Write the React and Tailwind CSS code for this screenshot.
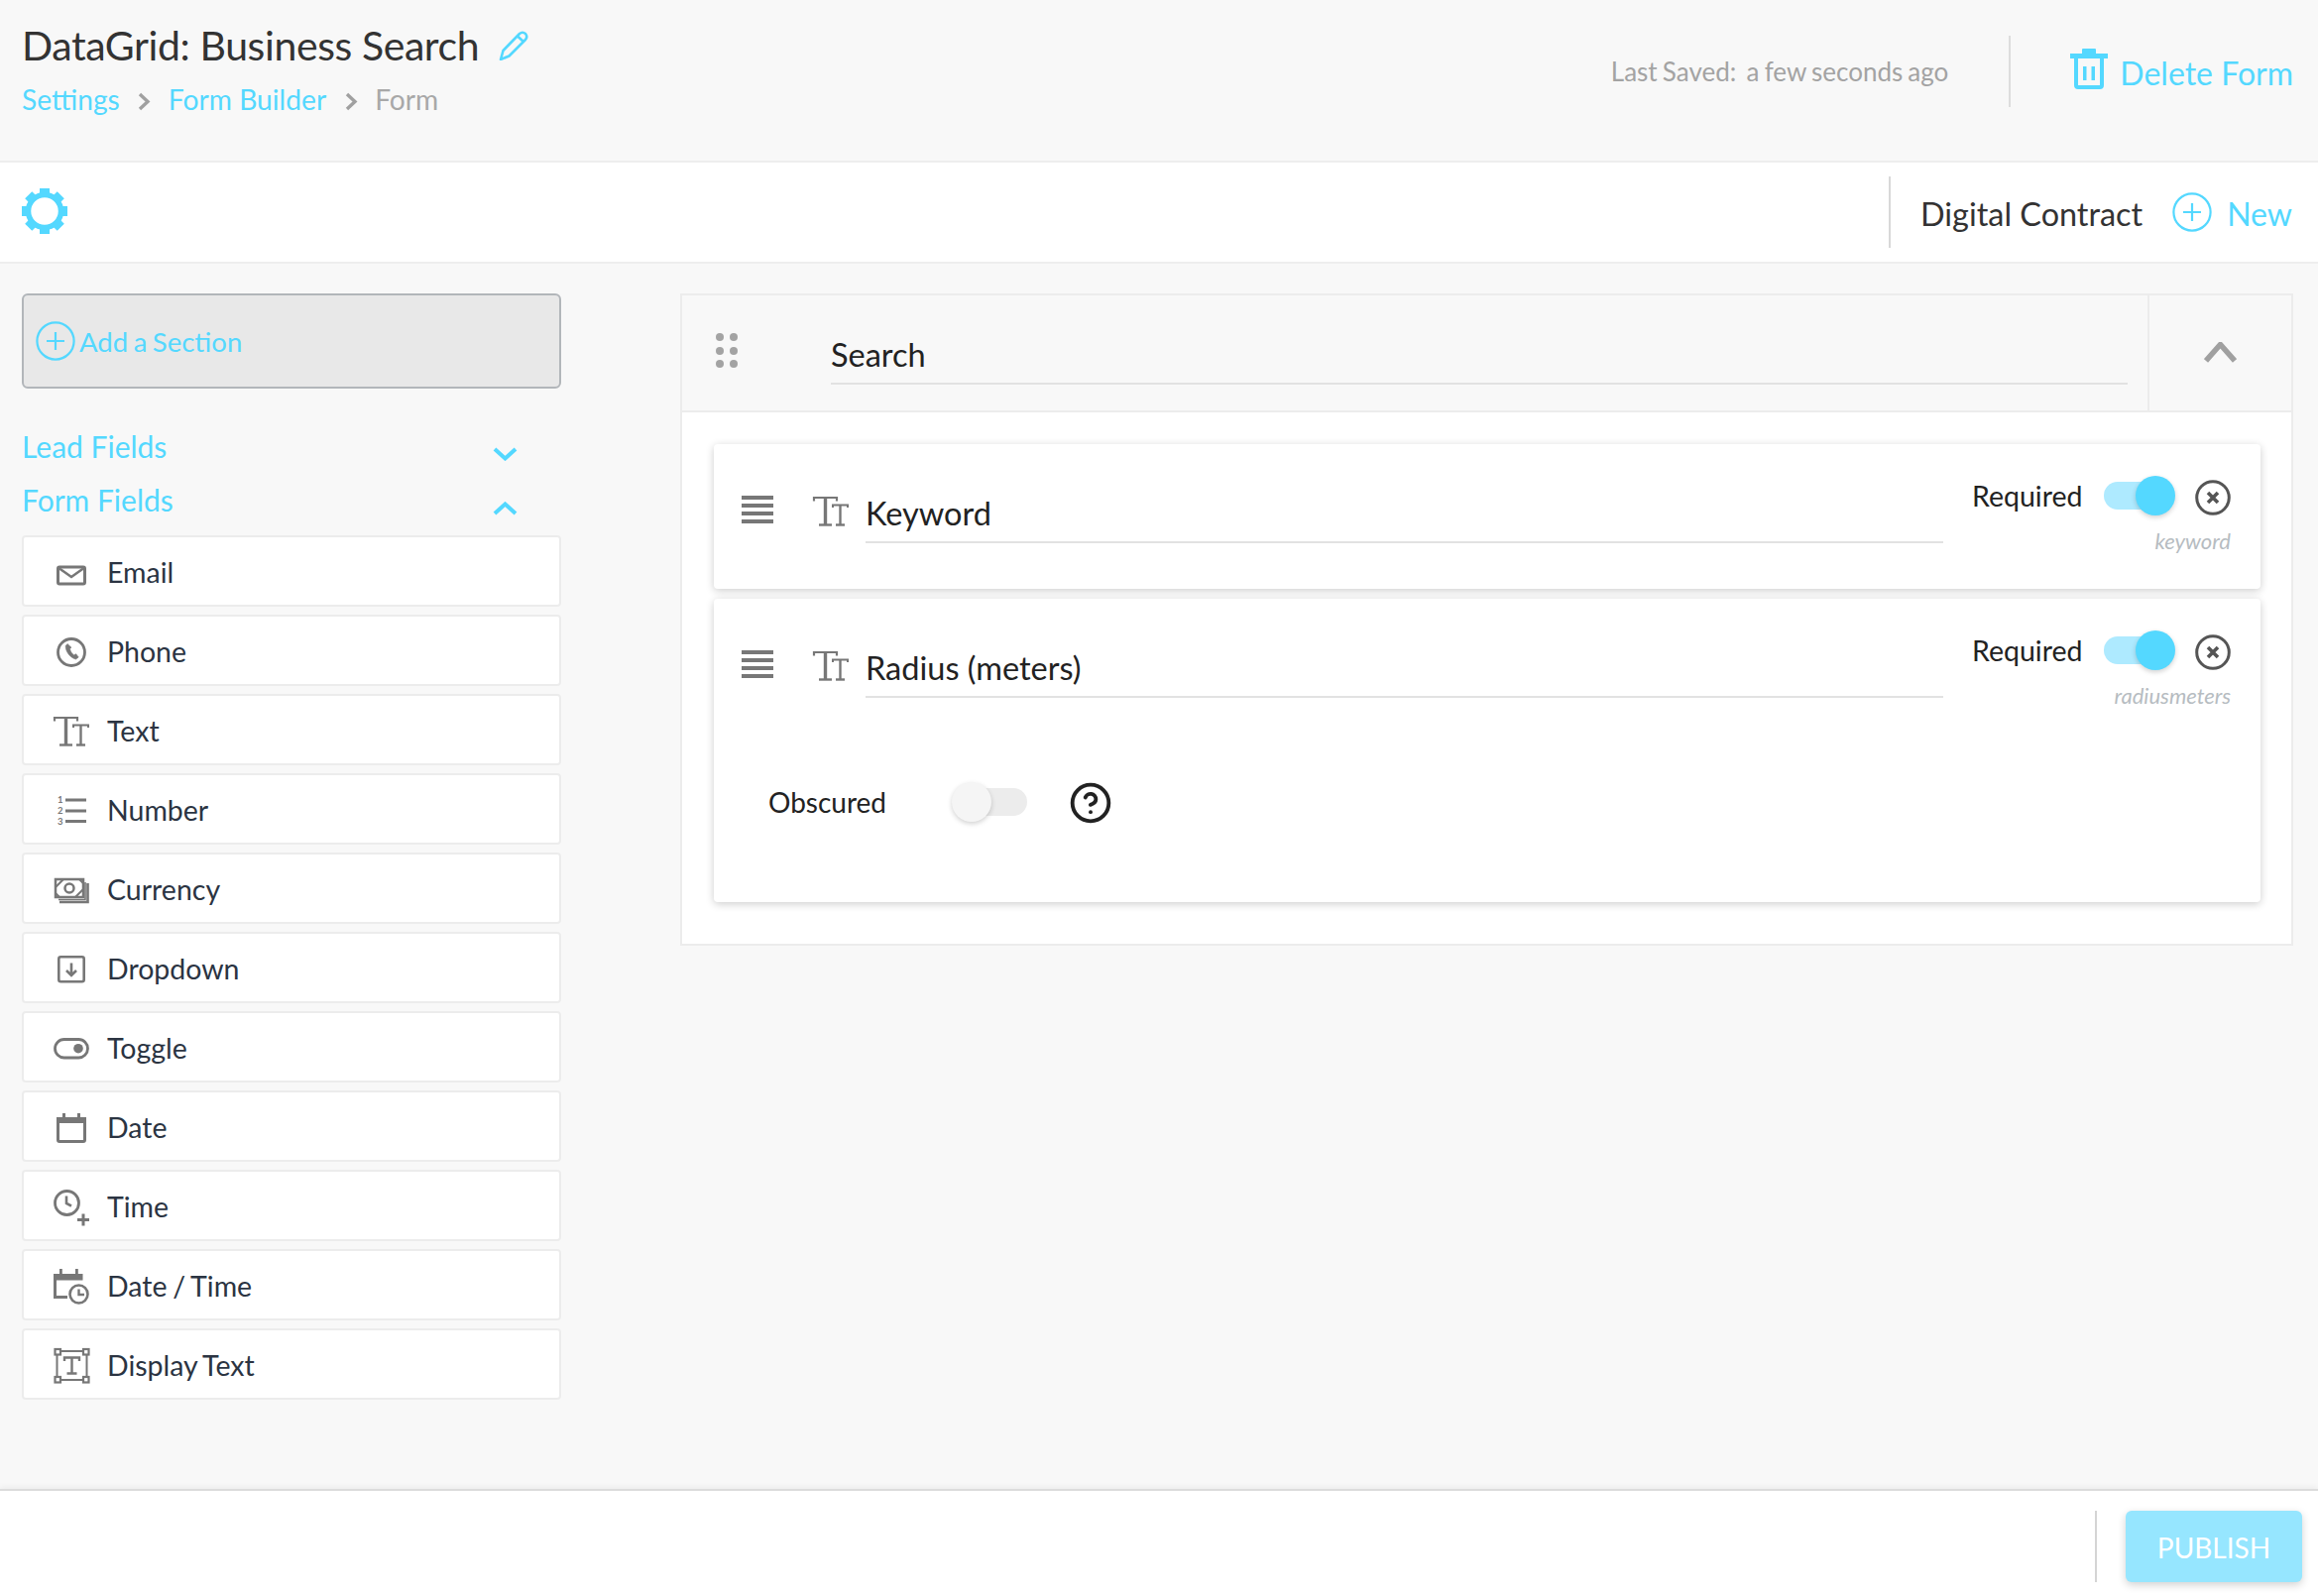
import React from "react";
import { CircleHelp } from "lucide-react";

const gray = "#777777";

function Gear() {
  return (
    <svg width="46" height="46" viewBox="0 0 46 46" fill="none" className="mb-[2px]">
      <circle cx="23" cy="23" r="16.5" stroke="#54d8ff" strokeWidth="5.5" />
      {[0, 45, 90, 135, 180, 225, 270, 315].map((a) => (
        <rect key={a} x="18" y="0" width="10" height="8" fill="#54d8ff" transform={`rotate(${a} 23 23)`} />
      ))}
    </svg>
  );
}

function Pencil() {
  return (
    <svg width="30" height="30" viewBox="0 0 30 30" fill="none" stroke="#54d8ff" strokeWidth="2.6" strokeLinejoin="round">
      <path d="M2 29 L4.5 20 L21 3 Q24 0.5 27 3 Q29.5 6 27 9 L10.5 25.5 Z" />
      <path d="M19 5.5 L25 11" />
    </svg>
  );
}

function Trash() {
  return (
    <svg width="38" height="41" viewBox="0 0 38 41" fill="#54d8ff">
      <rect x="12" y="0" width="14" height="8" rx="1" />
      <rect x="0" y="5" width="38" height="5" />
      <path d="M6 10 V37 Q6 39 8 39 H30 Q32 39 32 37 V10" fill="none" stroke="#54d8ff" strokeWidth="4" />
      <rect x="13" y="18" width="3.5" height="14" />
      <rect x="21.5" y="18" width="3.5" height="14" />
    </svg>
  );
}

function PlusCircle() {
  return (
    <svg width="40" height="40" viewBox="0 0 40 40" fill="none" stroke="#54d8ff" strokeWidth="2.2" className="shrink-0">
      <circle cx="20" cy="20" r="18.6" />
      <path d="M11 20 H29 M20 11 V29" />
    </svg>
  );
}

function Chevron({ up, color = "#54d8ff", w = 25, h = 14, sw = 4 }) {
  const points = up
    ? `2,${h - 2} ${w / 2},2.5 ${w - 2},${h - 2}`
    : `2,2 ${w / 2},${h - 2.5} ${w - 2},2`;
  return (
    <svg width={w} height={h} viewBox={`0 0 ${w} ${h}`} fill="none" stroke={color} strokeWidth={sw}>
      <polyline points={points} />
    </svg>
  );
}

function Crumb() {
  return (
    <svg width="13" height="19" viewBox="0 0 13 19" fill="none" stroke="#a0a0a0" strokeWidth="3.4" className="mt-[11px]">
      <polyline points="2,2 10,9.5 2,17" />
    </svg>
  );
}

function TtIcon() {
  return (
    <svg width="36" height="36" viewBox="0 0 36 36" fill="none" stroke={gray} className="overflow-visible shrink-0">
      <path d="M1 9.5 V6 H24 V9.5" strokeWidth="2.2" />
      <path d="M12.5 6 V33" strokeWidth="3.4" />
      <path d="M6 33.5 H19" strokeWidth="2.4" />
      <path d="M20 16 V13.5 H35 V16" strokeWidth="2" />
      <path d="M27.5 13.5 V33" strokeWidth="2.4" />
      <path d="M23 33.5 H32" strokeWidth="2.4" />
    </svg>
  );
}

// sidebar field icons all sit in a 36 box
const fieldIcons = {
  Email: (
    <g fill="none" stroke={gray} strokeWidth="3">
      <rect x="4.5" y="14" width="27" height="17" rx="1.5" />
      <polyline points="6,15.5 18,24 30,15.5" strokeWidth="2.5" />
    </g>
  ),
  Phone: (
    <g fill="none" stroke={gray}>
      <circle cx="18" cy="20" r="13.5" strokeWidth="2.8" />
      <path d="M14 11.5 L12.2 13.5 C12 19 16.5 25.5 22.5 27 L25.2 25 L22.7 21.7 L20.5 22.8 C18.5 21.5 17 19 16.5 16.6 L18 15.2 Z" fill={gray} strokeWidth="0.6" />
    </g>
  ),
  Number: (
    <g>
      <path d="M12 9 H33 M12 20 H33 M12 30.5 H33" stroke={gray} strokeWidth="3" />
      <text x="4" y="11.5" fontSize="9.5" fontWeight="700" fill={gray} fontFamily="Lato, sans-serif">1</text>
      <text x="4" y="23" fontSize="9.5" fontWeight="700" fill={gray} fontFamily="Lato, sans-serif">2</text>
      <text x="4" y="34" fontSize="9.5" fontWeight="700" fill={gray} fontFamily="Lato, sans-serif">3</text>
    </g>
  ),
  Currency: (
    <g fill="none" stroke={gray} strokeWidth="2.5">
      <rect x="2" y="9" width="28" height="18" />
      <circle cx="16" cy="18" r="4.5" />
      <path d="M2 17 L10 9 M30 19 L22 27 M2 23 L6 27 M30 13 L26 9" strokeWidth="2" />
      <path d="M34.5 13 V32 H6" strokeWidth="2.6" />
      <path d="M32 12 V29.5 H5" strokeWidth="1.6" />
    </g>
  ),
  Dropdown: (
    <g fill="none" stroke={gray} strokeWidth="2.6">
      <rect x="5.3" y="7.3" width="25.4" height="25" rx="2" />
      <path d="M18 13.5 V26 M13 21 L18 26 L23 21" />
    </g>
  ),
  Toggle: (
    <g>
      <rect x="1.5" y="10.5" width="33" height="18.5" rx="9.2" fill="none" stroke={gray} strokeWidth="2.8" />
      <circle cx="25" cy="19.7" r="4.8" fill={gray} />
    </g>
  ),
  Date: (
    <g fill={gray}>
      <rect x="4.5" y="11" width="27" height="22.5" rx="1.5" fill="none" stroke={gray} strokeWidth="3" />
      <rect x="3" y="9" width="30" height="6" />
      <rect x="9" y="5" width="3" height="6" />
      <rect x="24" y="5" width="3" height="6" />
    </g>
  ),
  Time: (
    <g fill="none" stroke={gray}>
      <circle cx="13.5" cy="15.5" r="12" strokeWidth="2.8" />
      <polyline points="13,8.5 13,16 18,18.5" strokeWidth="2.6" />
      <path d="M24 32.5 H36 M30 26.5 V38.5" strokeWidth="3" />
    </g>
  ),
  "Date / Time": (
    <g fill="none" stroke={gray}>
      <path d="M1.5 10 V30.5 H14" strokeWidth="3" />
      <rect x="0" y="7" width="29.5" height="6.5" fill={gray} stroke="none" />
      <rect x="6" y="2" width="2.8" height="6" fill={gray} stroke="none" />
      <rect x="22" y="2" width="2.8" height="6" fill={gray} stroke="none" />
      <circle cx="25.5" cy="27.5" r="9" strokeWidth="2.6" />
      <polyline points="25.5,22.5 25.5,28 31,28" strokeWidth="2.4" />
    </g>
  ),
  "Display Text": (
    <g fill="none" stroke={gray}>
      <rect x="3.5" y="5" width="30" height="29" strokeWidth="2" />
      <g fill="#fff" strokeWidth="2.2">
        <rect x="1.5" y="3" width="5.5" height="5.5" />
        <rect x="30" y="3" width="5.5" height="5.5" />
        <rect x="1.5" y="31" width="5.5" height="5.5" />
        <rect x="30" y="31" width="5.5" height="5.5" />
      </g>
      <path d="M11 15 V11.5 H26 V15 M18.5 11.5 V27.5 M13.5 27.5 H23.5" strokeWidth="2.4" />
    </g>
  ),
};

const fields = ["Email", "Phone", "Text", "Number", "Currency", "Dropdown", "Toggle", "Date", "Time", "Date / Time", "Display Text"];

function FieldRow({ name }) {
  return (
    <div className="flex h-[72px] items-center rounded-[4px] border-2 border-[#ececec] bg-white pl-[30px] text-[28.5px] text-[#2b3442] [word-spacing:-1.5px]">
      {name === "Text" ? (
        <TtIcon />
      ) : (
        <svg width="36" height="36" viewBox="0 0 36 36" className="shrink-0 overflow-visible">
          {fieldIcons[name]}
        </svg>
      )}
      <span className="ml-[18px] pt-[2px]">{name}</span>
    </div>
  );
}

function Switch({ on }) {
  return (
    <div className={`relative h-[28px] w-[68px] shrink-0 rounded-full ${on ? "bg-[#aeeaff]" : "bg-[#ececec]"}`}>
      <div
        className={`absolute top-[-6px] h-[40px] w-[40px] rounded-full shadow-[0_2px_5px_rgba(0,0,0,0.18)] ${
          on ? "right-[-4px] bg-[#54d8ff]" : "left-[-8px] bg-[#f5f5f5]"
        }`}
      />
    </div>
  );
}

function CloseCircle() {
  return (
    <svg width="36" height="36" viewBox="0 0 36 36" fill="none" stroke="#555555" className="ml-[24px] mt-[4px] shrink-0">
      <circle cx="18" cy="18" r="16.3" strokeWidth="3" />
      <path d="M13 13 L23 23 M23 13 L13 23" strokeWidth="3.6" />
    </svg>
  );
}

function Hamburger() {
  return (
    <div className="flex h-[28px] w-[32px] shrink-0 flex-col justify-between">
      <div className="h-[3.5px] bg-[#777777]" />
      <div className="h-[3.5px] bg-[#777777]" />
      <div className="h-[3.5px] bg-[#777777]" />
      <div className="h-[3.5px] bg-[#777777]" />
    </div>
  );
}

function CardRow({ label, slug }) {
  return (
    <div className="flex items-start pl-[28px] pt-[52px]">
      <Hamburger />
      <div className="ml-[40px] mt-[-4px]">
        <TtIcon />
      </div>
      <div className="ml-[17px] mt-[-4px] h-[52px] w-[1087px] border-b-2 border-[#e2e2e2] text-[32.5px] leading-[44px] text-[#222222]">
        {label}
      </div>
      <div className="ml-[29px] mt-[-20px] flex w-[261px] flex-col items-end">
        <div className="flex h-[40px] w-full items-center">
          <span className="w-[112px] shrink-0 text-[28.5px] text-[#222222]">Required</span>
          <div className="ml-[21px]">
            <Switch on />
          </div>
          <CloseCircle />
        </div>
        <div className="mt-[12px] text-[22px] italic leading-[28px] text-[#b6bcc1]">{slug}</div>
      </div>
    </div>
  );
}

export default function App() {
  return (
    <div className="flex h-[1610px] w-[2338px] flex-col overflow-hidden bg-[#f8f8f8] font-['Lato',sans-serif]">
      {/* top header */}
      <header className="flex h-[164px] shrink-0 items-start justify-between border-b-2 border-[#eeeeee] pl-[22px] pr-[25px]">
        <div className="pt-[22px]">
          <div className="flex items-center">
            <h1 className="text-[41px] leading-[48px] tracking-[-0.4px] text-[#333333]">DataGrid: Business Search</h1>
            <div className="ml-[20px]">
              <Pencil />
            </div>
          </div>
          <div className="mt-[12px] flex items-start text-[28.2px] leading-[36px] text-[#54d8ff]">
            <span>Settings</span>
            <span className="mx-[18px] flex"><Crumb /></span>
            <span>Form Builder</span>
            <span className="ml-[19px] mr-[17px] flex"><Crumb /></span>
            <span className="text-[#a8a8a8]">Form</span>
          </div>
        </div>
        <div className="mt-[36px] flex h-[72px] items-center">
          <span className="text-[26px] text-[#a3a3a3] [word-spacing:-1.5px]">Last Saved:&nbsp; a few seconds ago</span>
          <div className="ml-[61px] h-[72px] w-[2px] bg-[#dddddd]" />
          <div className="mb-[5px] ml-[60px]">
            <Trash />
          </div>
          <span className="ml-[12px] pt-[4px] text-[32px] text-[#54d8ff]">Delete Form</span>
        </div>
      </header>

      {/* toolbar */}
      <div className="flex h-[102px] shrink-0 items-center justify-between border-b-2 border-[#eeeeee] bg-white pl-[22px] pr-[26px]">
        <Gear />
        <div className="flex items-center">
          <div className="h-[72px] w-[2px] bg-[#d8d8d8]" />
          <span className="ml-[30px] pt-[4px] text-[32.4px] text-[#333333]">Digital Contract</span>
          <div className="ml-[30px]">
            <PlusCircle />
          </div>
          <span className="ml-[15px] pt-[4px] text-[32px] text-[#54d8ff]">New</span>
        </div>
      </div>

      <main className="flex min-h-0 flex-1 items-start">
        {/* sidebar */}
        <aside className="ml-[22px] w-[544px] shrink-0 pt-[30px]">
          <button className="flex h-[96px] w-full items-center rounded-[6px] border-2 border-[#b2b6ba] bg-[#e8e8e8] pl-[12px] text-[27.5px] text-[#54d8ff] [word-spacing:-1.5px]">
            <PlusCircle />
            <span className="ml-[4px] pt-[2px]">Add a Section</span>
          </button>
          <div className="mt-[32px] flex h-[54px] items-center justify-between pr-[44px] text-[30px] text-[#54d8ff]">
            <span className="pb-[2px]">Lead Fields</span>
            <div className="mt-[14px] flex">
              <Chevron />
            </div>
          </div>
          <div className="mb-[8px] flex h-[54px] items-center justify-between pr-[44px] text-[30px] text-[#54d8ff]">
            <span className="pb-[2px]">Form Fields</span>
            <div className="mt-[16px] flex">
              <Chevron up />
            </div>
          </div>
          <div className="flex flex-col gap-[8px]">
            {fields.map((f) => (
              <FieldRow key={f} name={f} />
            ))}
          </div>
        </aside>

        {/* section */}
        <section className="ml-[120px] mt-[30px] w-[1627px] shrink-0 border-2 border-[#ececec]">
          <div className="flex h-[118px] border-b-2 border-[#ececec]">
            <div className="flex flex-1 items-start pl-[34px] pt-[38px]">
              <div className="grid grid-cols-2 gap-x-[6px] gap-y-[5.5px]">
                {[0, 1, 2, 3, 4, 5].map((i) => (
                  <div key={i} className="h-[8px] w-[8px] rounded-full bg-[#a3a3a3]" />
                ))}
              </div>
              <div className="ml-[94px] h-[52px] w-[1308px] border-b-2 border-[#e2e2e2] text-[32.5px] leading-[44px] text-[#222222]">
                Search
              </div>
            </div>
            <div className="flex w-[145px] items-center justify-center border-l-2 border-[#ececec] pb-[2px]">
              <Chevron up color="#a0a0a0" w={33} h={21} sw={5.5} />
            </div>
          </div>
          <div className="flex flex-col gap-[10px] bg-white pb-[42px] pl-[32px] pr-[31px] pt-[32px]">
            <div className="h-[146px] rounded-[4px] bg-white shadow-[0_2px_8px_rgba(0,0,0,0.2)]">
              <CardRow label="Keyword" slug="keyword" />
            </div>
            <div className="h-[306px] rounded-[4px] bg-white shadow-[0_2px_8px_rgba(0,0,0,0.2)]">
              <CardRow label="Radius (meters)" slug="radiusmeters" />
              <div className="mt-[73px] flex h-[40px] items-center pl-[55px]">
                <span className="w-[120px] shrink-0 text-[28px] text-[#222222]">Obscured</span>
                <div className="ml-[73px]">
                  <Switch />
                </div>
                <CircleHelp size={44} strokeWidth={2.1} color="#222222" className="ml-[42px] mt-[2px] shrink-0" />
              </div>
            </div>
          </div>
        </section>
      </main>

      {/* footer */}
      <footer className="flex h-[108px] shrink-0 items-start justify-end border-t-2 border-[#dcdcdc] bg-white pr-[16px] pt-[20px] shadow-[0_-2px_6px_rgba(0,0,0,0.05)]">
        <div className="h-[72px] w-[2px] bg-[#d4d4d4]" />
        <button className="ml-[29px] flex h-[72px] w-[178px] items-center justify-center rounded-[6px] bg-[#96e6ff] pt-[2px] text-[28px] text-white shadow-[0_3px_8px_rgba(0,0,0,0.18)]">
          PUBLISH
        </button>
      </footer>
    </div>
  );
}
